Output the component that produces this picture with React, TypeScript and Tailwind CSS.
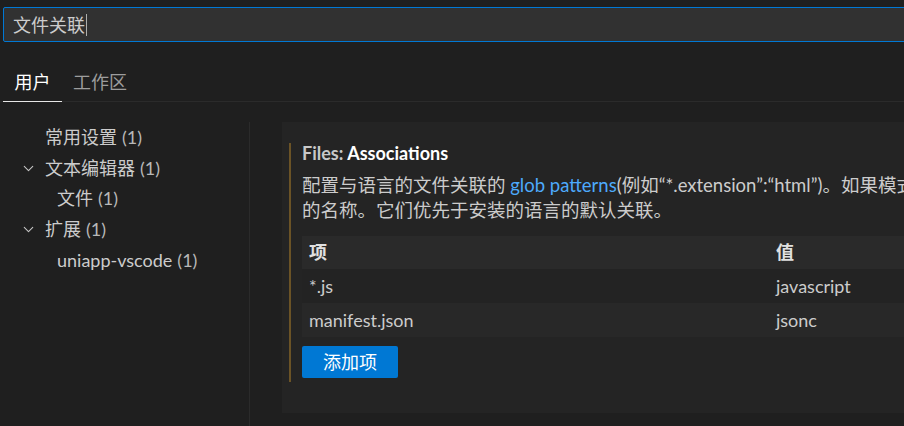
import { ChevronDown } from "lucide-react";

const font = "font-['Lato','Noto_Sans_CJK_SC',sans-serif]";

const toc = [
  { label: "常用设置", count: 1, level: 0, chevron: false },
  { label: "文本编辑器", count: 1, level: 0, chevron: true },
  { label: "文件", count: 1, level: 1, chevron: false },
  { label: "扩展", count: 1, level: 0, chevron: true },
  { label: "uniapp-vscode", count: 1, level: 1, chevron: false },
];

const rows = [
  { key: "*.js", value: "javascript" },
  { key: "manifest.json", value: "jsonc" },
];

export default function App() {
  return (
    <div className={`w-[904px] h-[426px] overflow-hidden bg-[#1f1f1f] text-[#cccccc] ${font}`}>
      {/* 搜索框 */}
      <div className="pt-[7px] pl-[3px]">
        <div className="flex h-[35px] w-[940px] items-center rounded-[2px] border border-[#0078d4] bg-[#313131] pl-[9px]">
          <span className="text-[18px] leading-none text-[#cccccc]">文件关联</span>
          <span className="ml-px h-[22px] w-px bg-[#aeafad]" />
        </div>
      </div>

      {/* 用户 / 工作区 */}
      <div className="relative mt-[19px] flex h-[41px] border-b border-[#2b2b2b]">
        <div className="relative ml-[3px] flex h-full w-[59px] items-start justify-center pt-[8px] text-[18px] text-[#ffffff]">
          用户
          <span className="absolute bottom-[-1px] left-0 h-[1.5px] w-full bg-[#e7e7e7]" />
        </div>
        <div className="ml-[11px] pt-[8px] text-[18px] text-[#9d9d9d]">工作区</div>
      </div>

      <div className="mt-[20px] flex h-[400px]">
        {/* 目录 */}
        <div className="w-[250px] shrink-0 border-r border-[#2b2b2b]">
          {toc.map((item) => (
            <div
              key={item.label}
              className={`flex h-[30.8px] items-center text-[18px] ${item.level === 1 ? "pl-[57px]" : "pl-[20px]"}`}
            >
              {item.level === 0 && (
                <span className="flex w-[25px] items-center">
                  {item.chevron && <ChevronDown className="size-[17px] text-[#c5c5c5]" strokeWidth={1.5} />}
                </span>
              )}
              <span>{item.label}</span>
              <span className="ml-[5px] text-[#b8b8b8]">({item.count})</span>
            </div>
          ))}
        </div>

        {/* 设置项 */}
        <div className="ml-[32px] flex-1">
          <div className="h-[291px] w-[700px] bg-[#242424] pt-[21px] pl-[7px]">
            <div className="border-l-2 border-[#6b5326] pb-[4px] pl-[11px]">
              <div className="h-[20px] text-[18px] font-bold leading-[20px]">
                <span className="text-[#c8c8c8]">Files: </span>
                <span className="text-white">Associations</span>
              </div>
              <div className="mt-[10px] text-[18.5px] leading-[25px]">
                <div className="whitespace-nowrap">
                  配置与语言的文件关联的 <span className="text-[#4daafc]">glob patterns</span>(例如“*.extension”:“html”)。如果模式冲突，将使用更长的模式。这样会覆盖已安装语言
                </div>
                <div>的名称。它们优先于安装的语言的默认关联。</div>
              </div>

              <div className="mt-[13px] w-[700px] text-[18px]">
                <div className="flex h-[33px] items-center bg-[#2a2a2a] font-bold text-[#e0e0e0]">
                  <div className="w-[467px] pl-[7px]">项</div>
                  <div className="pl-[7px]">值</div>
                </div>
                {rows.map((r, i) => (
                  <div
                    key={r.key}
                    className={`flex h-[34px] items-center ${i % 2 === 1 ? "bg-[#282828]" : "bg-[#232323]"}`}
                  >
                    <div className="w-[467px] pl-[7px]">{r.key}</div>
                    <div className="pl-[7px]">{r.value}</div>
                  </div>
                ))}
              </div>

              <button className="mt-[9px] flex h-[32px] w-[96px] items-center justify-center rounded-[2px] bg-[#0078d4] text-[18px] text-white">
                添加项
              </button>
            </div>
          </div>
        </div>
      </div>
    </div>
  );
}
